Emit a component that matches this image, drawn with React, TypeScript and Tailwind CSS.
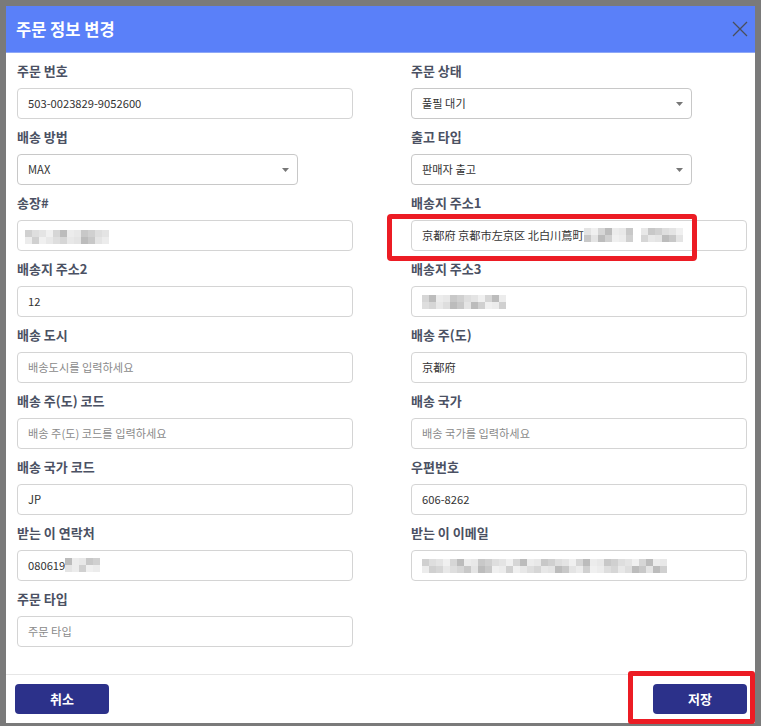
import React from 'react';

// pixelated redaction blocks used where values are masked
const SHADES = ['#e4e4e4', '#d6d6d6', '#ececec', '#c8c8c8', '#dedede', '#f0f0f0', '#bcbcbc', '#e8e8e8', '#d0d0d0'];

const Mosaic: React.FC<{ cols: number; rows?: number; seed: number; cell?: number }> = ({
  cols,
  rows = 2,
  seed,
  cell = 7,
}) => (
  <span className="inline-flex flex-col align-middle">
    {Array.from({ length: rows }).map((_, r) => (
      <span key={r} className="flex">
        {Array.from({ length: cols }).map((__, c) => (
          <span
            key={c}
            style={{
              width: cell,
              height: cell,
              background: SHADES[(seed * 7 + c * 5 + r * 3 + ((c * r + seed) % 4)) % SHADES.length],
            }}
          />
        ))}
      </span>
    ))}
  </span>
);

const Label: React.FC<{ children: React.ReactNode }> = ({ children }) => (
  <div className="h-5 leading-5 mb-[7px] text-[13px] font-bold text-[#4b5163]">{children}</div>
);

const TextBox: React.FC<{ value?: React.ReactNode; placeholder?: string }> = ({ value, placeholder }) => (
  <div className="h-[31px] w-full flex items-center px-[10px] border border-[#d4d4d4] rounded-[4px] bg-white text-[11.2px] overflow-hidden whitespace-nowrap">
    {value !== undefined ? (
      <span className="flex items-center text-[#333]">{value}</span>
    ) : (
      <span className="text-[#8a8a8a]">{placeholder}</span>
    )}
  </div>
);

const SelectBox: React.FC<{ value: string }> = ({ value }) => (
  <div className="h-[31px] w-[281px] flex items-center justify-between pl-[10px] pr-[8px] border border-[#c8c8c8] rounded-[4px] bg-white text-[11.2px] text-[#333]">
    <span>{value}</span>
    <svg width="7" height="4" viewBox="0 0 7 4">
      <path d="M0 0 L7 0 L3.5 4 Z" fill="#777" />
    </svg>
  </div>
);

const Field: React.FC<{ label: string; children: React.ReactNode }> = ({ label, children }) => (
  <div className="mb-2">
    <Label>{label}</Label>
    {children}
  </div>
);

export default function App() {
  return (
    <div
      className="relative w-[761px] h-[726px] bg-[#7a7a7a] pt-[6px] pl-[6px] overflow-hidden"
      style={{ fontFamily: '"Noto Sans CJK KR", "Noto Sans", sans-serif' }}
    >
      <div className="w-[749px] h-[717px] bg-white flex flex-col">
        {/* header */}
        <div className="h-[47px] shrink-0 bg-[#5a80f9] border-b border-[#8ea8f7] flex items-center justify-between pl-[10px] pr-[7px]">
          <span className="text-[16.5px] font-bold text-white">주문 정보 변경</span>
          <svg width="16" height="16" viewBox="0 0 16 16">
            <path d="M1 1 L15 15 M15 1 L1 15" stroke="#4a4f5c" strokeWidth="1.3" />
          </svg>
        </div>

        {/* form */}
        <div className="flex-1 pt-2 pl-[11px] pr-2 grid grid-cols-[336px_336px] gap-x-[58px] content-start">
          <div>
            <Field label="주문 번호">
              <TextBox value="503-0023829-9052600" />
            </Field>
            <Field label="배송 방법">
              <SelectBox value="MAX" />
            </Field>
            <Field label="송장#">
              <TextBox value={<span className="-ml-[3px]"><Mosaic cols={12} seed={1} /></span>} />
            </Field>
            <Field label="배송지 주소2">
              <TextBox value="12" />
            </Field>
            <Field label="배송 도시">
              <TextBox placeholder="배송도시를 입력하세요" />
            </Field>
            <Field label="배송 주(도) 코드">
              <TextBox placeholder="배송 주(도) 코드를 입력하세요" />
            </Field>
            <Field label="배송 국가 코드">
              <TextBox value="JP" />
            </Field>
            <Field label="받는 이 연락처">
              <TextBox
                value={
                  <>
                    <span>080619</span>
                    <Mosaic cols={5} seed={3} cell={7} />
                  </>
                }
              />
            </Field>
            <Field label="주문 타입">
              <TextBox placeholder="주문 타입" />
            </Field>
          </div>

          <div>
            <Field label="주문 상태">
              <SelectBox value="풀필 대기" />
            </Field>
            <Field label="출고 타입">
              <SelectBox value="판매자 출고" />
            </Field>
            <Field label="배송지 주소1">
              <TextBox
                value={
                  <>
                    <span>京都府 京都市左京区 北白川蔦町</span>
                    <Mosaic cols={7} seed={5} />
                    <span className="w-2" />
                    <Mosaic cols={6} seed={2} />
                  </>
                }
              />
            </Field>
            <Field label="배송지 주소3">
              <TextBox value={<Mosaic cols={12} seed={4} />} />
            </Field>
            <Field label="배송 주(도)">
              <TextBox value="京都府" />
            </Field>
            <Field label="배송 국가">
              <TextBox placeholder="배송 국가를 입력하세요" />
            </Field>
            <Field label="우편번호">
              <TextBox value="606-8262" />
            </Field>
            <Field label="받는 이 이메일">
              <TextBox value={<Mosaic cols={35} seed={6} />} />
            </Field>
          </div>
        </div>

        {/* footer */}
        <div className="shrink-0 border-t border-[#e6e6e6] flex items-center justify-between pl-[9px] pr-2 pt-[9px] pb-[9px]">
          <button className="w-[94px] h-[30px] rounded-[4px] bg-[#2c318a] text-white text-[13px] font-bold">취소</button>
          <button className="w-[94px] h-[30px] rounded-[4px] bg-[#2c318a] text-white text-[13px] font-bold">저장</button>
        </div>
      </div>

      {/* red annotation frames */}
      <div className="absolute left-[387px] top-[214px] w-[310px] h-[47px] border-[5px] border-[#ec1c24] rounded-[4px]" />
      <div className="absolute left-[628px] top-[671px] w-[127px] h-[53px] border-[5px] border-[#ec1c24] rounded-[3px]" />
    </div>
  );
}
